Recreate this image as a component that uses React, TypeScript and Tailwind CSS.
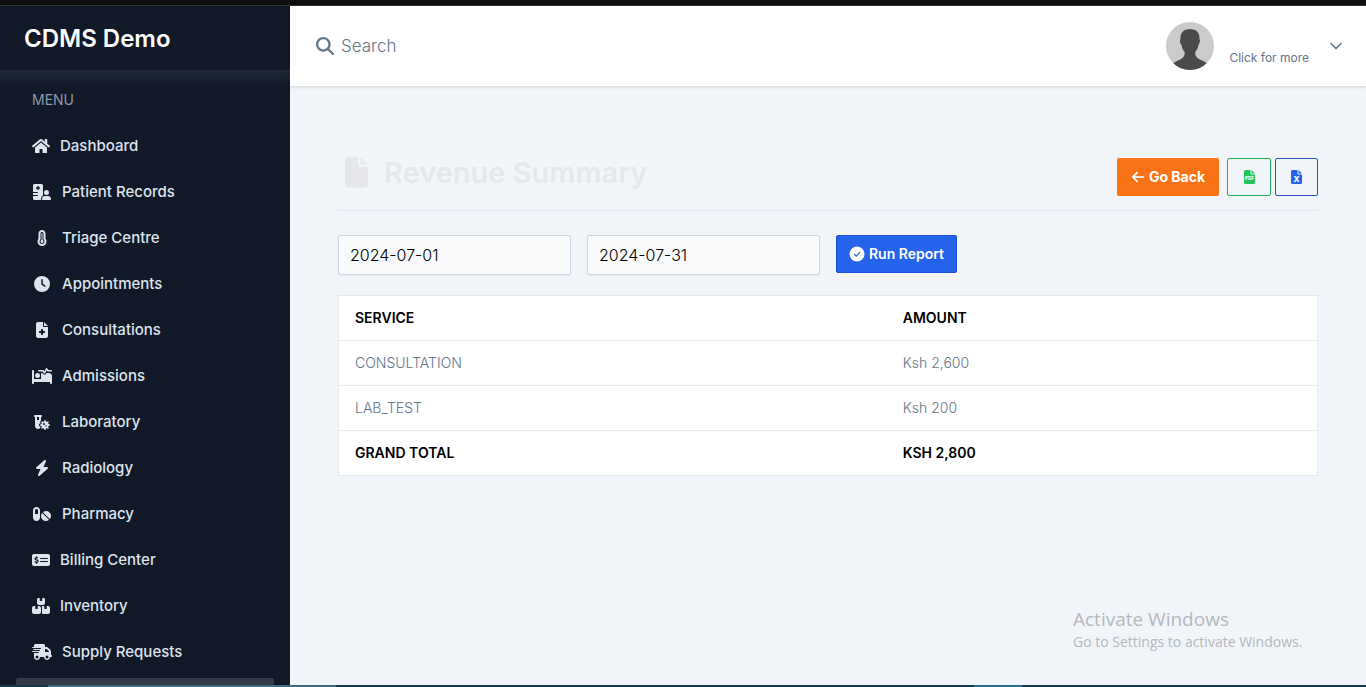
import React from "react";
import { FaHome } from "react-icons/fa";
import {
  FaClock, FaFileMedical, FaBedPulse, FaVialVirus, FaBolt, FaMoneyCheckDollar,
  FaBoxesStacked, FaMagnifyingGlass, FaFile, FaArrowLeft, FaHospitalUser,
  FaTemperatureFull, FaTruckFast, FaPills,
} from "react-icons/fa6";
import { FiChevronDown } from "react-icons/fi";

const menu = [
  { label: "Dashboard", Icon: FaHome, box: "w-[18px]", size: "w-[18px]" },
  { label: "Patient Records", Icon: FaHospitalUser, box: "w-5", size: "w-[18px]" },
  { label: "Triage Centre", Icon: FaTemperatureFull, box: "w-5", size: "w-[10px]" },
  { label: "Appointments", Icon: FaClock, box: "w-5", size: "w-4" },
  { label: "Consultations", Icon: FaFileMedical, box: "w-5", size: "w-3" },
  { label: "Admissions", Icon: FaBedPulse, box: "w-5", size: "w-5" },
  { label: "Laboratory", Icon: FaVialVirus, box: "w-5", size: "w-4" },
  { label: "Radiology", Icon: FaBolt, box: "w-5", size: "w-[14px]" },
  { label: "Pharmacy", Icon: FaPills, box: "w-5", size: "w-[18px]" },
  { label: "Billing Center", Icon: FaMoneyCheckDollar, box: "w-[18px]", size: "w-[18px]" },
  { label: "Inventory", Icon: FaBoxesStacked, box: "w-[18px]", size: "w-[18px]" },
  { label: "Supply Requests", Icon: FaTruckFast, box: "w-5", size: "w-5" },
];

const rows = [
  { service: "CONSULTATION", amount: "Ksh 2,600" },
  { service: "LAB_TEST", amount: "Ksh 200" },
];

function FileTypeIcon({ mark, fontSize, baseline }: { mark: string; fontSize: number; baseline: number }) {
  return (
    <svg viewBox="0 0 11 14" className="h-[14px] w-[11px]" aria-hidden="true">
      <path
        d="M1.500 0H6.500V3.500a1 1 0 0 0 1 1H11v8A1.500 1.500 0 0 1 9.500 14h-8A1.500 1.500 0 0 1 0 12.500v-11A1.500 1.500 0 0 1 1.500 0ZM7.500 0 11 3.500H7.500Z"
        fill="currentColor"
      />
      <text x="5.500" y={baseline} fontSize={fontSize} fontWeight="800" textAnchor="middle" fill="#ffffff">
        {mark}
      </text>
    </svg>
  );
}

function CheckCircle() {
  return (
    <svg viewBox="0 0 16 16" className="size-4" aria-hidden="true">
      <circle cx="8" cy="8" r="7.500" fill="#ffffff" />
      <path d="m5 8 2.200 2.200L11 6.200" fill="none" stroke="#2563eb" strokeWidth="1.200" />
    </svg>
  );
}

function Avatar() {
  return (
    <svg viewBox="0 0 48 48" className="size-12 rounded-full" aria-hidden="true">
      <rect width="48" height="48" fill="#cbcbcb" />
      <path
        d="M24 7c-6.500 0-10 4-9.600 10.500-.8.400-.5 3.800.9 5 .6 3.500 1.700 5.500 3.400 7.500.2 5-2.500 6.500-5.700 8-3 1.300-5 2.500-7 4.500V48h36v-5.500c-2-2-4-3.200-7-4.500-3.200-1.500-6-3-5.800-8 1.800-2 2.800-4 3.400-7.500 1.400-1.200 1.700-4.600.9-5C34 11 30.500 7 24 7Z"
        fill="#4a4a4a"
      />
    </svg>
  );
}

function Sidebar() {
  return (
    <aside className="flex w-[290px] shrink-0 flex-col overflow-hidden bg-[#111827]">
      <div className="h-16 shrink-0 px-6 pt-3">
        <a href="#" className="text-2xl leading-[42px] font-semibold text-white">CDMS Demo</a>
      </div>
      <nav className="flex-1 overflow-hidden bg-linear-to-b from-[#1d2735] to-[#111827] to-3%">
        <h2 className="px-8 pt-5 text-sm leading-5 text-[#8a99af]">MENU</h2>
        <ul className="mt-4 flex flex-col gap-[6px] px-4">
          {menu.map(({ label, Icon, box, size }) => (
            <li key={label}>
              <a href="#" className="flex h-10 items-center gap-[10px] px-4 text-[15px] font-medium text-[#dee4ee]">
                <span className={`flex justify-center ${box}`}>
                  <Icon className={`h-4 shrink-0 ${size}`} />
                </span>
                {label}
              </a>
            </li>
          ))}
          <li>
            <a href="#" aria-label="Reports" className="block h-10 rounded-xs bg-[#333a48]" />
          </li>
        </ul>
      </nav>
    </aside>
  );
}

export default function App() {
  return (
    <div className="flex h-screen flex-col overflow-hidden bg-[#f1f5f9] font-['Inter','Liberation_Sans',sans-serif]">
      <div className="h-[6px] shrink-0 border-b border-[#333333] bg-[#0f0f0f]" />
      <div className="flex min-h-0 flex-1">
        <Sidebar />
        <div className="flex min-w-0 flex-1 flex-col">
          <header className="flex h-20 shrink-0 items-center justify-between bg-white pr-5 pl-[26px] shadow-[0_1px_3px_rgba(0,0,0,0.14)]">
            <label className="flex items-center gap-[7px] text-[#64748b]">
              <FaMagnifyingGlass className="size-[18px]" />
              <input
                type="text"
                aria-label="Search"
                placeholder="Search"
                className="w-80 bg-transparent pt-[2px] text-[17px] font-light outline-none placeholder:text-[#64748b]"
              />
            </label>
            <button className="flex items-center text-[#64748b]">
              <Avatar />
              <span className="mt-6 ml-[15px] text-xs">Click for more</span>
              <FiChevronDown className="ml-[17px] size-5" />
            </button>
          </header>
          <main className="flex-1 px-12 pt-[72px]">
            <div className="flex items-start justify-between border-b border-[#e2e8f0] pb-[14px]">
              <h1 className="flex h-[38px] items-start gap-4 pl-[7px] text-[29px] leading-[30px] font-semibold text-[#e5e7eb]">
                <FaFile className="-mt-px h-[31px] w-[23px]" />
                Revenue Summary
              </h1>
              <div className="flex gap-1">
                <button className="mr-1 flex h-[38px] w-[102px] items-center justify-center gap-1 rounded-xs bg-[#f97316] text-sm font-bold text-white">
                  <FaArrowLeft className="size-[14px]" />
                  Go Back
                </button>
                <button aria-label="Export PDF" className="flex h-[38px] w-11 items-center justify-center rounded-xs border border-[#22b455] text-[#22c55e]">
                  <FileTypeIcon mark="PDF" fontSize={4.5} baseline={10} />
                </button>
                <button aria-label="Export Excel" className="flex h-[38px] w-[43px] items-center justify-center rounded-xs border border-[#2d55b8] text-[#2563eb]">
                  <FileTypeIcon mark="X" fontSize={8} baseline={12} />
                </button>
              </div>
            </div>
            <form className="mt-6 flex items-start gap-4">
              <input
                type="text"
                aria-label="Start date"
                defaultValue="2024-07-01"
                className="h-10 w-[233px] rounded-xs border border-[#cbd5e1] bg-[#f9fafb] px-[11px] text-base font-light text-black shadow-xs"
              />
              <input
                type="text"
                aria-label="End date"
                defaultValue="2024-07-31"
                className="h-10 w-[233px] rounded-xs border border-[#cbd5e1] bg-[#f9fafb] px-[11px] text-base font-light text-black shadow-xs"
              />
              <button type="button" className="flex h-[38px] w-[121px] items-center justify-center gap-1 rounded-xs border border-[#1d4ed8] bg-[#2563eb] text-sm font-semibold text-white">
                <CheckCircle />
                Run Report
              </button>
            </form>
            <table className="mt-5 w-full border-collapse border border-[#e5e7eb] bg-white text-left text-sm">
              <thead>
                <tr className="h-[45px] border-b border-[#e5e7eb] text-black">
                  <th className="w-[56%] px-4 font-semibold">SERVICE</th>
                  <th className="px-4 font-semibold">AMOUNT</th>
                </tr>
              </thead>
              <tbody>
                {rows.map((r) => (
                  <tr key={r.service} className="h-[45px] border-b border-[#e5e7eb] font-light text-[#64748b]">
                    <td className="px-4">{r.service}</td>
                    <td className="px-4">{r.amount}</td>
                  </tr>
                ))}
              </tbody>
              <tfoot>
                <tr className="h-[45px] text-black">
                  <th className="px-4 font-semibold">GRAND TOTAL</th>
                  <th className="px-4 font-semibold">KSH 2,800</th>
                </tr>
              </tfoot>
            </table>
          </main>
        </div>
      </div>
      <div className="flex h-[2px] shrink-0 bg-[#123a4d]">
        <div className="ml-12 w-72 bg-[#3d6b80]" />
        <div className="mr-[344px] ml-auto w-12 bg-[#237391]" />
      </div>
      <div className="pointer-events-none absolute right-[57px] bottom-[35px] w-[236px] font-['Open_Sans','Noto_Sans',sans-serif] whitespace-nowrap text-[#b4b8bc]">
        <p className="text-[19px] leading-[26px]">Activate Windows</p>
        <p className="text-sm leading-5">Go to Settings to activate Windows.</p>
      </div>
    </div>
  );
}
